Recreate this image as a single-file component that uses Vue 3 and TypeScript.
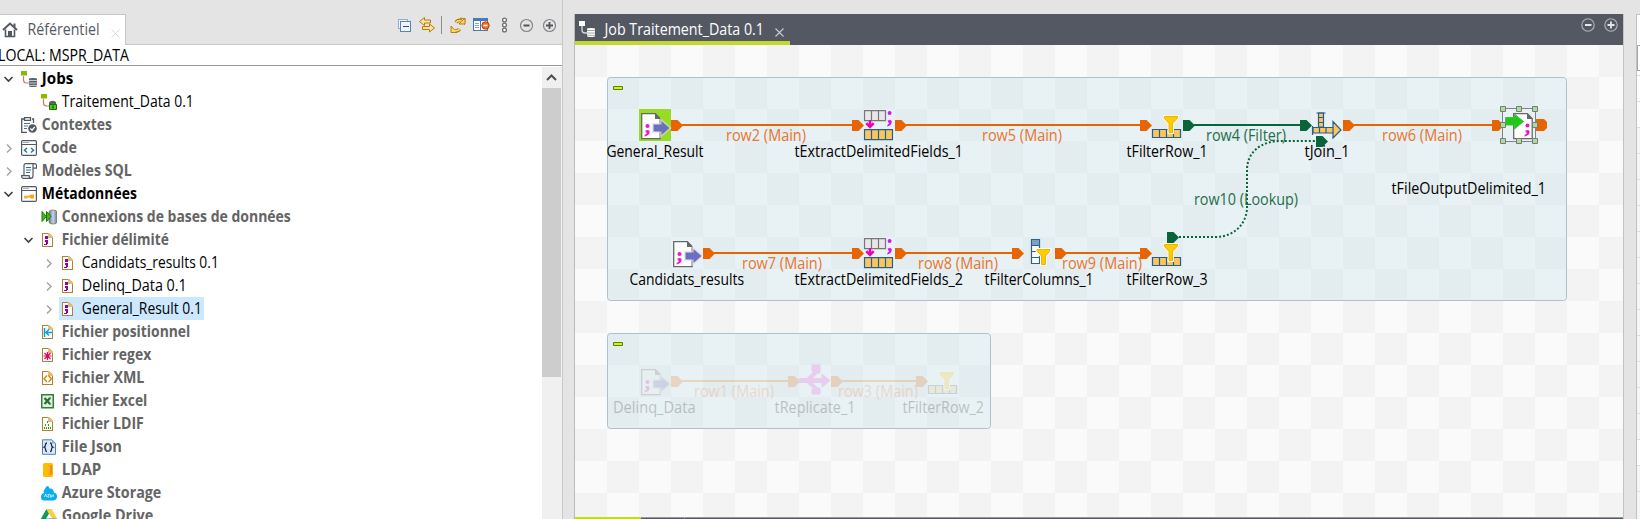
<script setup lang="ts">
interface TreeRow {
  label: string
  level: number
  icon: string
  width: number
  tone: 'strong' | 'muted' | 'plain'
  chevron?: 'open' | 'closed'
  selected?: boolean
}

const rows: TreeRow[] = [
  { label: 'Jobs', level: 0, icon: 'jobs', width: 31.5, tone: 'strong', chevron: 'open' },
  { label: 'Traitement_Data 0.1', level: 1, icon: 'job', width: 132, tone: 'plain' },
  { label: 'Contextes', level: 0, icon: 'contexts', width: 70, tone: 'muted' },
  { label: 'Code', level: 0, icon: 'code', width: 35, tone: 'muted', chevron: 'closed' },
  { label: 'Modèles SQL', level: 0, icon: 'sql', width: 90, tone: 'muted', chevron: 'closed' },
  { label: 'Métadonnées', level: 0, icon: 'metadata', width: 95, tone: 'strong', chevron: 'open' },
  { label: 'Connexions de bases de données', level: 1, icon: 'database', width: 229, tone: 'muted' },
  { label: 'Fichier délimité', level: 1, icon: 'delimited', width: 107, tone: 'muted', chevron: 'open' },
  { label: 'Candidats_results 0.1', level: 2, icon: 'delimited', width: 137, tone: 'plain', chevron: 'closed' },
  { label: 'Delinq_Data 0.1', level: 2, icon: 'delimited', width: 105, tone: 'plain', chevron: 'closed' },
  { label: 'General_Result 0.1', level: 2, icon: 'delimited', width: 120, tone: 'plain', chevron: 'closed', selected: true },
  { label: 'Fichier positionnel', level: 1, icon: 'positional', width: 128.5, tone: 'muted' },
  { label: 'Fichier regex', level: 1, icon: 'regex', width: 89.5, tone: 'muted' },
  { label: 'Fichier XML', level: 1, icon: 'xml', width: 82.5, tone: 'muted' },
  { label: 'Fichier Excel', level: 1, icon: 'excel', width: 85.5, tone: 'muted' },
  { label: 'Fichier LDIF', level: 1, icon: 'ldif', width: 82, tone: 'muted' },
  { label: 'File Json', level: 1, icon: 'json', width: 60, tone: 'muted' },
  { label: 'LDAP', level: 1, icon: 'ldap', width: 39.5, tone: 'muted' },
  { label: 'Azure Storage', level: 1, icon: 'azure', width: 99.5, tone: 'muted' },
  { label: 'Google Drive', level: 1, icon: 'drive', width: 91.5, tone: 'muted' },
]

const fileIcons = ['delimited', 'positional', 'regex', 'xml', 'ldif']

interface FlowNode { kind: string; x: number; y: number; label: string; lx: number; ly: number; lw: number }
interface Flow { label: string; x1: number; x2: number; y: number; lx: number; lw: number; green?: boolean }

const nodes: FlowNode[] = [
  { kind: 'start', x: 639, y: 109, label: 'General_Result', lx: 606.5, ly: 157, lw: 97 },
  { kind: 'extract', x: 863, y: 109, label: 'tExtractDelimitedFields_1', lx: 794.5, ly: 157, lw: 168.5 },
  { kind: 'filterRow', x: 1151, y: 109, label: 'tFilterRow_1', lx: 1126.5, ly: 157, lw: 81 },
  { kind: 'join', x: 1311, y: 109, label: 'tJoin_1', lx: 1304.5, ly: 157, lw: 45 },
  { kind: 'output', x: 1503, y: 109, label: 'tFileOutputDelimited_1', lx: 1391.5, ly: 194, lw: 154.5 },
  { kind: 'input', x: 671, y: 237, label: 'Candidats_results', lx: 629.5, ly: 285, lw: 114.5 },
  { kind: 'extract', x: 863, y: 237, label: 'tExtractDelimitedFields_2', lx: 794.5, ly: 285, lw: 168.5 },
  { kind: 'filterColumns', x: 1023, y: 237, label: 'tFilterColumns_1', lx: 984.5, ly: 285, lw: 109 },
  { kind: 'filterRow', x: 1151, y: 237, label: 'tFilterRow_3', lx: 1126.5, ly: 285, lw: 81 },
]
const flows: Flow[] = [
  { label: 'row2 (Main)', x1: 671, x2: 852, y: 125, lx: 726, lw: 80 },
  { label: 'row5 (Main)', x1: 895, x2: 1140, y: 125, lx: 982, lw: 80 },
  { label: 'row4 (Filter)', x1: 1183, x2: 1300, y: 125, lx: 1206, lw: 80, green: true },
  { label: 'row6 (Main)', x1: 1343, x2: 1492, y: 125, lx: 1382, lw: 80 },
  { label: 'row7 (Main)', x1: 703, x2: 852, y: 253, lx: 742, lw: 80 },
  { label: 'row8 (Main)', x1: 895, x2: 1012, y: 253, lx: 918, lw: 80 },
  { label: 'row9 (Main)', x1: 1055, x2: 1140, y: 253, lx: 1062, lw: 80 },
]
const offNodes: FlowNode[] = [
  { kind: 'input', x: 639, y: 365, label: 'Delinq_Data', lx: 613, ly: 413, lw: 82.5 },
  { kind: 'replicate', x: 799, y: 365, label: 'tReplicate_1', lx: 774.5, ly: 413, lw: 81 },
  { kind: 'filterRow', x: 927, y: 365, label: 'tFilterRow_2', lx: 902.5, ly: 413, lw: 81.5 },
]
const offFlows: Flow[] = [
  { label: 'row1 (Main)', x1: 671, x2: 788, y: 381, lx: 694, lw: 80 },
  { label: 'row3 (Main)', x1: 831, x2: 916, y: 381, lx: 838, lw: 80 },
]
const groups = [
  { flows, nodes, off: false },
  { flows: offFlows, nodes: offNodes, off: true },
]
const handles = [
  [1503, 109], [1519, 109], [1535, 109], [1503, 125],
  [1535, 125], [1503, 141], [1519, 141], [1535, 141],
]
const plug = (x: number, y: number) => `M${x} ${y - 5}h6.5l5.5 5.5l-5.5 5.5h-6.5z`
</script>

<template>
  <div class="studio">
    <section class="repository">
      <header class="tabbar">
        <div class="tab">
          <svg class="home" width="16" height="16" viewBox="0 0 16 16"><path d="M1 8L8 1.5 15 8M12.5 5V1.5" fill="none" stroke="#545863" stroke-width="2" /><path d="M3.5 7.5V14.5H12.5V7.5" fill="none" stroke="#545863" stroke-width="1.6" /><path d="M6 9h4v6H6z" fill="#545863" /></svg>
          <svg class="tab-label" width="76" height="28"><text x="-.5" y="20" textLength="72" lengthAdjust="spacingAndGlyphs">Référentiel</text></svg>
          <svg class="tab-close" width="9" height="9"><path d="M.5.5l8 8m0-8l-8 8" stroke="#dcdcdc" /></svg>
        </div>
        <div class="tools">
          <svg width="166" height="24" viewBox="396 13 166 24">
            <g fill="#eef5fc" stroke="#5b83b0" shape-rendering="crispEdges"><path d="M398.5 19.5h9v9h-9z" stroke="#8bb0d0" /><path d="M400.5 21.5h10v10h-10z" /><path d="M403 26.5h6" stroke="#24507e" stroke-width="1.5" /></g>
            <g fill="#ffe39a" stroke="#b47c10" stroke-linejoin="round"><path d="M419.5 21.5l5-4v2.500h6v3h-6v2.500z" /><path d="M434.500 28l-5-4v2.500h-7v3h7v2.500z" /></g>
            <path d="M441.500 16v18" stroke="#8e8e8e" />
            <g fill="none" stroke="#ad7610" stroke-width="3.600"><path d="M456 22.500Q457.500 20 461 20.500" /><path d="M459.500 29Q458 31.500 454.500 30.500" /></g>
            <g fill="#ffd65e" stroke="#ad7610" stroke-width=".900" stroke-linejoin="round"><path d="M460.500 18l4 6.500.500-5.500z" /><path d="M459 24h6v-6z" /><path d="M451 26v6.500l6 0z" /></g>
            <g fill="none" stroke="#ffd65e" stroke-width="1.800"><path d="M456 22.500Q457.500 20 461.500 20.800" /><path d="M459.500 29Q458 31.500 454 30.300" /></g>
            <g shape-rendering="crispEdges"><path d="M473.500 18.500h14v12h-14z" fill="#fff" stroke="#4779ae" /><path d="M473 18h15v3h-15z" fill="#457bb8" /><path d="M475 23.500h4m-4 2h4m-4 2h4m3-4h4m-4 2h4m-4 2h4" stroke="#7da9d2" /><path d="M480.500 21v10" stroke="#4779ae" /></g>
            <circle cx="485.500" cy="25.500" r="3.700" fill="#f07020" stroke="#c14000" /><path d="M483.500 25.500h4" stroke="#fff" stroke-width="1.500" />
            <g fill="#fff" stroke="#6c6c6c" stroke-width="1.300"><circle cx="504.500" cy="20" r="1.900" /><circle cx="504.500" cy="25" r="1.900" /><circle cx="504.500" cy="30" r="1.900" /></g>
            <g fill="none" stroke="#858589" stroke-width="1.200"><circle cx="526.500" cy="25.500" r="6" /><circle cx="549.500" cy="25.500" r="6" /></g>
            <path d="M523.500 25.500h6M546 25.500h7M549.500 22v7" stroke="#55555b" stroke-width="1.800" />
          </svg>
        </div>
      </header>
      <div class="project"><svg width="200" height="20"><text x="-2" y="16" textLength="131" lengthAdjust="spacingAndGlyphs">LOCAL: MSPR_DATA</text></svg></div>
      <div class="tree-wrap">
        <ul class="tree">
          <li v-for="row in rows" :key="row.label" class="row" :class="'level-' + row.level">
            <span class="twisty">
              <svg v-if="row.chevron === 'open'" width="11" height="8" viewBox="0 0 11 8"><path d="M1.500 2l4 4 4-4" fill="none" stroke="#404040" stroke-width="1.600" /></svg>
              <svg v-else-if="row.chevron" class="closed" width="11" height="11" viewBox="0 0 11 11"><path d="M4 1.500l4 4-4 4" fill="none" stroke="#a5a5a5" stroke-width="1.500" /></svg>
            </span>
            <span class="item" :class="{ selected: row.selected }">
              <svg class="icon" width="16" height="16" viewBox="0 0 16 16">
                <g v-if="fileIcons.includes(row.icon)" shape-rendering="crispEdges"><path d="M1.500 1.500h6.500l3.500 3.500v9.500H1.500z" fill="#fff" stroke="#ac8334" /><path d="M7 1h1l4 4v1H7z" fill="#dfbd7b" stroke="none" /></g>
                <g v-if="row.icon === 'jobs' || row.icon === 'job'">
                  <path d="M0 0h6v4.500H0z" fill="#8cb800" /><path d="M2.500 5v4q0 3 3 3h2.500" fill="none" stroke="#d17676" stroke-width="1.200" />
                  <g v-if="row.icon === 'jobs'"><path d="M8 8q0-1 4-1t4 1v7q0 1-4 1t-4-1z" fill="#5b616b" /><path d="M8 9.500h8M8 12h8M8 14.400h8" stroke="#e4e4e4" stroke-width=".800" /></g>
                  <g v-else><path d="M8 8q4-2.500 7 0v3H8z" fill="#6a6e72" /><path d="M9.500 11V9.500q2.500-3 5 0V11" fill="none" stroke="#346a20" /><path d="M8.500 10.500h7v5h-7z" fill="#49d316" stroke="#246b0a" /><path d="M12 11.500v3" stroke="#1f6108" stroke-width="1.400" /></g>
                </g>
                <g v-else-if="row.icon === 'contexts'" fill="none" stroke="#545863"><path d="M6 15.400H.700V2H3m8 0h1.500v4M3.500.700h6v2.600h-6z" stroke-width="1.300" /><path d="M3 6.500h6M3 9h4M3 11.500h3" stroke="#497494" /><circle cx="11.500" cy="11.500" r="4.300" fill="#545863" stroke="none" /><path d="M9.300 11.500l1.700 1.700 2.800-3.400" stroke="#fff" stroke-width="1.300" /></g>
                <g v-else-if="row.icon === 'code'" fill="none" stroke="#545863"><rect x=".6" y=".6" width="14.800" height="14.800" rx="1.200" stroke-width="1.200" /><path d="M1 4.500h14M2.500 2.500h1m1 0h1m1 0h1" /><path d="M6 8l-2.500 2.300L6 12.500M10 8l2.500 2.300L10 12.500" stroke="#2674ad" stroke-width="1.500" /></g>
                <g v-else-if="row.icon === 'sql'" fill="none" stroke="#545863" stroke-width="1.200"><path d="M3 12V2.500Q3 .700 5 .700h8.500q2 0 2 2v2.500H12V2.500Q12 .700 13.500.700M12 5v8q0 2.300-2.500 2.300H2Q.600 15.300.600 12.600h7.500q0 2.700 2 2.700" /><path d="M5 4.500h5M5 7h5M5 9.500h4" stroke="#2d6a9c" stroke-width="1" /></g>
                <g v-else-if="row.icon === 'metadata'" fill="none" stroke="#545863"><rect x=".6" y=".6" width="14.800" height="14.800" rx="1.200" stroke-width="1.200" /><path d="M1 4.500h14M2.500 2.500h1m1 0h1m1 0h1" /><path d="M3 10.500h6M4 11v1.500M6 11v1.500" stroke="#f5a623" stroke-width="1.500" /><path d="M8.500 9.500L10 8.500h3v4H10L8.500 11.500z" fill="#f5a623" stroke="none" /></g>
                <g v-else-if="row.icon === 'database'"><defs><linearGradient id="cyl"><stop offset="0" stop-color="#5670a4" /><stop offset=".5" stop-color="#c9d3e5" /><stop offset="1" stop-color="#687fa9" /></linearGradient></defs><path d="M8 3q0-2 4-2t4 2v10q0 2-4 2t-4-2z" fill="url(#cyl)" stroke="#8c794a" stroke-width=".800" /><path d="M1 2.500l4.500 5-4.500 5z" fill="#3fbc16" stroke="#28720e" /><path d="M5.500 2.500l4.500 5-4.500 5z" fill="#3fbc16" stroke="#28720e" /></g>
                <g v-else-if="row.icon === 'delimited'" fill="#990099" shape-rendering="crispEdges"><path d="M4 4h3v3H4zM4 8h3v4H6v1H3v-1h2v-2H4z" /></g>
                <path v-else-if="row.icon === 'positional'" d="M3.500 4v9M11 8.500H5M8 5.500l-3 3 3 3" fill="none" stroke="#00a0f0" stroke-width="1.500" />
                <path v-else-if="row.icon === 'regex'" d="M6.500 5v8M2.500 9h8M3.500 6l6 6m0-6l-6 6" stroke="#ee0060" stroke-width="1.200" />
                <path v-else-if="row.icon === 'xml'" d="M6 5.500L3 8.700 6 12M7.500 5.500l3 3.200-3 3.300" fill="none" stroke="#d58a00" stroke-width="1.400" />
                <g v-else-if="row.icon === 'excel'"><path d="M.750 1.750h11.500v13H.750z" fill="#e3f1e2" stroke="#2f8038" stroke-width="1.500" /><path d="M3.500 5l5.500 6m0-6l-5.500 6" stroke="#2a6e2d" stroke-width="2.200" /><path d="M8 5h2M8 11h2" stroke="#327936" /></g>
                <g v-else-if="row.icon === 'ldif'" fill="#2ba400"><path d="M6 5h1v2H6zM4 8h1v2H4zM7 8h1v2H7zM3 11h1v2H3zM5 11h1v2H5zM7 11h1v2H7zM9 11h1v2H9z" /></g>
                <g v-else-if="row.icon === 'json'" fill="none"><path d="M1.500.800h9.500l3.500 3.500v11h-13z" fill="#d9e9fb" stroke="#4e81bb" /><path d="M11 1v3.500h3" fill="#82b3e3" /><path d="M6 4q-1.500 0-1.500 1.800T3.200 8.200Q4.500 8.500 4.500 10.500T6 12.500M9 4q1.500 0 1.500 1.800t1.300 2.400q-1.300.300-1.300 2.300T9 12.500" stroke="#252a31" stroke-width="1.300" /></g>
                <g v-else-if="row.icon === 'ldap'"><rect x="2" y="1" width="10" height="14" rx="1.500" fill="#ffbd00" /><path d="M7 3.500h4v9H7z" fill="#f58c00" /><path d="M7 5h2M7 7h2M7 9h2M7 11h2" stroke="#ffe040" /></g>
                <g v-else-if="row.icon === 'azure'"><path d="M3 15.500Q0 15.500 0 12t3-4Q2 5 4 4q1-3 2.500-3Q8 1 8.500 3.500q4-.500 4.500 4 3 .500 3 4t-3.500 4z" fill="#08aef0" /><path d="M3.500 12l1.200-3 1.300 3M6.500 9.500h2l-2 2.500h2M9.500 9.500V12h1.500V9.500M12 12v-2h1" fill="none" stroke="#e7f8ff" stroke-width=".800" /></g>
                <g v-else-if="row.icon === 'drive'"><path d="M5.500 1L0 10.500 2.700 15 8 5.500z" fill="#129b54" /><path d="M5.500 1h5L16 10.500h-5z" fill="#fdcf34" /><path d="M5.500 10.500H16L13 15H2.700z" fill="#3670df" /></g>
              </svg>
              <svg class="label" :class="row.tone" :width="row.width" height="23"><text x="-.2" y="17" :textLength="row.width" lengthAdjust="spacingAndGlyphs">{{ row.label }}</text></svg>
            </span>
          </li>
        </ul>
        <div class="scrollbar">
          <svg width="19" height="21"><path d="M5 13l4.500-4.500L14 13" fill="none" stroke="#505050" stroke-width="2" /></svg>
          <div class="thumb"></div>
        </div>
      </div>
    </section>

    <section class="editor">
      <header class="job-bar">
        <div class="job-tab">
          <svg class="job-icon" width="17" height="17" viewBox="0 0 17 17"><path d="M0 0h6v5H0z" fill="#fff" /><path d="M3 5v4q0 3 3 3h2" fill="none" stroke="#d7d7d9" stroke-width="1.300" /><path d="M8 8q0-1 4-1t4 1v7q0 1-4 1t-4-1z" fill="#fff" /><path d="M8 9.500h8M8 12h8M8 14.300h8" stroke="#8f9198" stroke-width=".800" /></svg>
          <svg class="job-label" width="162" height="28"><text x="-.5" y="21" textLength="159.500" lengthAdjust="spacingAndGlyphs">Job Traitement_Data 0.1</text></svg>
          <svg class="job-close" width="9" height="9"><path d="M.5.5l8 8m0-8l-8 8" stroke="#c9cacd" stroke-width="1.100" /></svg>
        </div>
        <svg class="win-tools" width="37" height="14"><g fill="none" stroke="#b1b3b9" stroke-width="1.100"><circle cx="7" cy="7" r="6.200" /><circle cx="30" cy="7" r="6.200" /></g><path d="M4 7h6.500M26.500 7h7M30 3.500v7" stroke="#e4e5e7" stroke-width="1.800" /></svg>
      </header>

      <svg class="canvas" width="1048" height="472" viewBox="575 45 1048 472">
        <defs>
          <pattern id="tiles" x="575" y="45" width="64" height="64" patternUnits="userSpaceOnUse"><path d="M0 0h64v64H0z" fill="#fafafa" /><path d="M0 0h32v32H0zM32 32h32v32H32z" fill="#f3f3f3" /></pattern>
        </defs>
        <path d="M575 45h1048v472H575z" fill="url(#tiles)" shape-rendering="crispEdges" />
        <g class="subjob"><rect x="607.500" y="77.500" width="959" height="223" rx="3" /><rect x="607.500" y="333.500" width="383" height="95" rx="3" /></g>
        <g class="collapse"><path d="M613.500 86.500h9v3h-9z" /><path d="M613.500 342.500h9v3h-9z" /></g>

        <g v-for="group in groups" :key="String(group.off)" :class="{ off: group.off }">
          <g v-for="flow in group.flows" :key="flow.label" :class="flow.green ? 'green' : 'orange'">
            <path class="wire" :d="`M${flow.x1 + 11} ${flow.y}H${flow.x2 + 1}`" />
            <path :d="plug(flow.x1, flow.y)" /><path :d="plug(flow.x2, flow.y)" />
            <text :x="flow.lx" :y="flow.y + 16" :textLength="flow.lw" lengthAdjust="spacingAndGlyphs">{{ flow.label }}</text>
          </g>
          <g v-if="!group.off" class="green">
            <path d="M1179 237H1215C1236 237 1247 222 1247 207V170C1247 153 1260 141 1281 141H1317" class="lookup" />
            <path :d="plug(1167, 237)" /><path :d="plug(1316, 141)" />
            <text x="1194" y="205" textLength="104" lengthAdjust="spacingAndGlyphs">row10 (Lookup)</text>
          </g>
          <path v-if="!group.off" class="orange" d="M1535 119h9l3 3v6l-3 3h-9z" />
          <g v-for="node in group.nodes" :key="node.label">
            <g :transform="`translate(${node.x} ${node.y})`">
              <path v-if="node.kind === 'start'" d="M0 0h32v32H0z" fill="#97db24" />
              <g v-if="node.kind === 'start' || node.kind === 'input'">
                <path d="M2.700 4.700h13.500l5 5v20H2.700z" fill="#fff" stroke="#68686b" stroke-width="1.300" /><path d="M16 4.500h1l5 5.500H16z" fill="#68686b" />
                <circle cx="8.500" cy="17" r="2" fill="#ed16bd" /><path d="M6.300 21.500q4.300-1.500 4.300 1.300 0 3.700-5 4.700v-1.500q2.300-.800 2.300-2.200-1.300 0-1.600-2.300z" fill="#ed16bd" />
                <path d="M14.500 15.500h8V12l8 7-8 7v-3.500h-8z" fill="#6b70be" stroke="#ded8ee" stroke-width="3" stroke-opacity=".65" paint-order="stroke" />
              </g>
              <g v-else-if="node.kind === 'extract'">
                <path d="M1.500 1.700h21v10h-21zM8.500 1.500v10M15.500 1.500v10" fill="#e8e6e8" stroke="#77777a" stroke-width="1.200" />
                <circle cx="26.600" cy="4" r="2" fill="#d414f5" /><path d="M24.600 11.500q4.200-1.500 4.200 1.300 0 3.500-4.400 4.700v-1.500q1.700-.700 1.800-1.900-1.300-.200-1.600-2.600z" fill="#d414f5" />
                <path d="M7 11v7M3.300 14.200L7 18l3.700-3.800" fill="none" stroke="#ed00b5" stroke-width="2.500" />
                <path d="M1.500 20.700h28v10h-28zM8.500 20.500v10M15.500 20.500v10M22.500 20.500v10" fill="#fbc55d" stroke="#255f91" stroke-width="1.200" />
              </g>
              <g v-else-if="node.kind === 'filterRow'">
                <path d="M1.500 20.500h28v8h-28zM8.500 20.500v8M15.500 20.500v8M22.500 20.500v8" fill="#fbc55d" stroke="#255f91" stroke-width="1.200" />
                <path d="M13.500 7.500h13v1.500l-5 5.500v9h-3.500v-9l-5-5.500z" fill="#fc0" stroke="#fff8df" stroke-width="3" paint-order="stroke" /><path d="M13.500 7.500h13v1.500l-5 5.500v9h-3.500v-9l-5-5.500z" fill="#fc0" stroke="#d6aa00" stroke-width=".700" />
              </g>
              <g v-else-if="node.kind === 'filterColumns'">
                <path d="M8.500 2.500h8v24h-8zM8.500 8.500h8M8.500 14.500h8M8.500 20.500h8" fill="#fff" stroke="#315f8a" stroke-width="1.200" /><path d="M9 3h7v5H9z" fill="#7d9fc0" />
                <path d="M14 12.500h13v1.500l-4.500 5v8.500H18.500V19l-4.500-5z" fill="#fc0" stroke="#fff" stroke-width="3" paint-order="stroke" /><path d="M14 12.500h13v1.500l-4.500 5v8.500H18.500V19l-4.500-5z" fill="#fc0" stroke="#d6aa00" stroke-width=".700" />
              </g>
              <g v-else-if="node.kind === 'join'">
                <path d="M7.500 4h5v14h-5zM7.500 8.500h5M7.500 13.500h5M2 18.500h20v-6l8 8.500-8 8v-5H2z" fill="#fbc55d" stroke="#255f91" stroke-width="1.200" /><path d="M5.500 4h9M8.500 18.500v5.500M15 18.500v5.500M22 18.500v5.500M1.500 17v9" stroke="#255f91" stroke-width="1.200" />
              </g>
              <g v-else-if="node.kind === 'replicate'">
                <path d="M0 13.500h8l7.500-7.500h-2.500V0h8v8h-2.500l-5.500 5.500h10V9l8 6.500-8 6.500v-4.500H13l5.500 5.500H21v6h-8v-4.500h2.500L8 17.500H0z" fill="#f13fe0" stroke="#cf52c8" stroke-width="1" />
              </g>
              <g v-else-if="node.kind === 'output'">
                <path d="M10.700 4.700h13.500l5 5v20H10.700z" fill="#fff" stroke="#68686b" stroke-width="1.300" /><path d="M24 4.500h1l5 5.500H24z" fill="#68686b" />
                <circle cx="24.500" cy="16.500" r="2" fill="#ed16bd" /><path d="M22.300 21.500q4.300-1.500 4.300 1.300 0 3.700-5 4.700v-1.500q2.300-.800 2.300-2.200-1.300 0-1.600-2.300z" fill="#ed16bd" />
                <path d="M2.500 8.500h9V5l9 7.500-9 7.500v-4h-9z" fill="#1bcc12" stroke="#50b653" />
              </g>
            </g>
            <text class="node-label" :x="node.lx" :y="node.ly" :textLength="node.lw" lengthAdjust="spacingAndGlyphs">{{ node.label }}</text>
          </g>
        </g>
        <path d="M1502.500 108.500h33v33h-33z" fill="none" stroke="#808488" />
        <path v-for="(h, i) in handles" :key="i" :d="`M${h[0] - 2.5} ${h[1] - 2.5}h5v5h-5z`" fill="#addc96" stroke="#777b7c" />
      </svg>
      <footer class="bottom-tabs"><i class="active"></i><i class="next"></i></footer>
    </section>

    <aside class="palette">
      <div class="palette-head"></div><div class="palette-search"></div>
      <div v-for="n in 17" :key="n" class="palette-row" :class="{ white: n <= 3 || n === 16 }"></div>
    </aside>
  </div>
</template>

<style>
body { margin: 0; overflow: hidden; }
</style>

<style scoped>
* { box-sizing: border-box; }
.studio { display: flex; width: 1640px; height: 519px; overflow: hidden; background: #e4e4e4; font: 15.4px "Open Sans", "Noto Sans", sans-serif; color: #000; }
svg { display: block; flex: none; }
.repository { display: flex; flex-direction: column; width: 563px; height: 519px; border-right: 1px solid #c8c8c8; }
.tabbar { display: flex; justify-content: space-between; height: 45px; padding-top: 14px; border-bottom: 1px solid #c6c6c6; flex: none; }
.tab { display: flex; width: 126px; height: 31px; border-top: 1px solid #c6c6c6; border-right: 1px solid #c6c6c6; background: #fff; padding-left: 2px; }
.home { margin-top: 7px; }
.tab-label { margin-left: 10px; fill: #545863; overflow: visible; }
.tab-close { margin: 14px 0 0 7px; }
.tools { margin-top: -1px; }
.project { height: 21px; background: #fff; border-bottom: 1px solid #9a9a9a; flex: none; }
.tree-wrap { display: flex; flex: 1; min-height: 0; padding-top: 1px; background: #fff; }
.tree { flex: 1; margin: 0; padding: 0; list-style: none; overflow: hidden; }
.row { display: flex; height: 23px; }
.level-1 { padding-left: 20px; }
.level-2 { padding-left: 40px; }
.twisty { display: flex; align-items: center; width: 19px; padding-left: 3px; }
.closed { margin-top: 1px; }
.item { display: flex; align-items: center; height: 23px; padding: 0 2px; }
.icon { margin-right: 5px; }
.label { overflow: visible; }
.selected { background: #cce8ff; }
.strong { font-weight: 700; }
.muted { font-weight: 700; fill: #646464; }
.scrollbar { width: 20px; padding-right: 1px; background: #f0f0f0; }
.thumb { height: 289px; background: #cdcdcd; }
.editor { display: flex; flex-direction: column; width: 1050px; height: 505px; margin: 14px 0 0 11px; border-left: 1px solid #bbb; border-right: 1px solid #c3c3c3; }
.job-bar { display: flex; justify-content: space-between; height: 31px; background: #545863; flex: none; }
.job-tab { display: flex; width: 215px; border-bottom: 4px solid #c2d82e; }
.job-icon { margin: 7px 0 0 4px; }
.job-label { margin-left: 9px; fill: #fff; overflow: visible; }
.job-close { margin: 14px 0 0 8px; }
.win-tools { margin: 4px 5px 0 0; }
.canvas text { font-size: 15.4px; }
.subjob { fill: #bfdbe3; fill-opacity: .29; stroke: #adc1cf; }
.collapse { fill: #bdfb00; stroke: #617f0c; }
.orange { fill: #e76500; }
.orange text { fill: #e87530; }
.green { fill: #08653a; }
.green text { fill: #1b6f4a; }
.wire { stroke: #e76500; stroke-width: 2; fill: none; }
.green .wire { stroke: #08653a; }
.lookup { fill: none; stroke: #08653a; stroke-width: 2; stroke-dasharray: 2 2; }
.off { opacity: .2; }
.bottom-tabs { display: flex; height: 2px; background: #545863; border-top: 1px solid #999; }
.active { width: 66px; height: 2px; margin-top: -1px; background: #c2d82e; }
.next { width: 44px; border-right: 1px solid #999; }
.palette { width: 4px; height: 505px; margin: 14px 0 0 12px; border-left: 1px solid #c2c2c2; background: #f6f6f6; }
.palette-head { height: 31px; border-top: 1px solid #c5c5c5; background: #fff; }
.palette-search { height: 26px; border: 1px solid #a6a6ae; border-right: 0; background: #fff; }
.palette-row { height: 26px; border-bottom: 1px solid #dedede; }
.palette-row:nth-child(3) { height: 5px; }
.white { background: #fff; }
</style>
